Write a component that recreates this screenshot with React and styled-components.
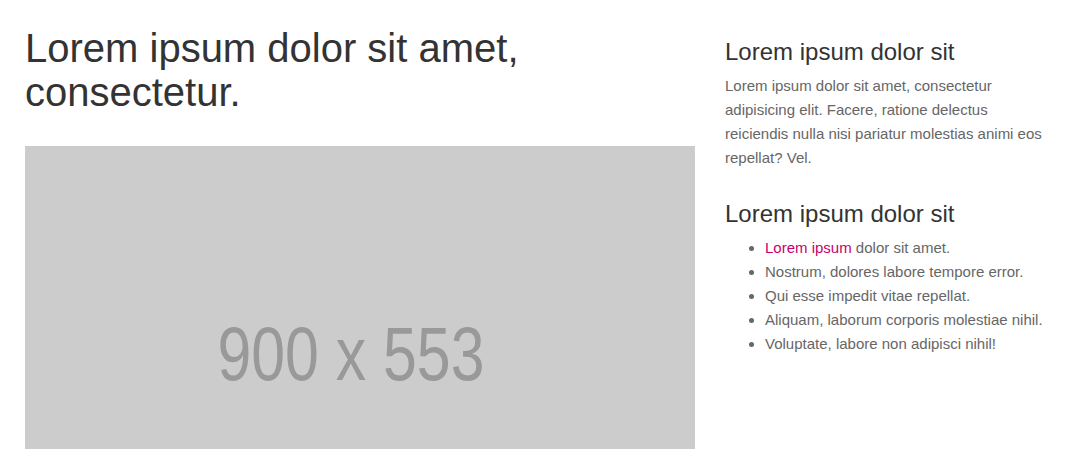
import styled, { createGlobalStyle } from "styled-components";

const GlobalStyle = createGlobalStyle`
  html, body {
    margin: 0;
    padding: 0;
    background: #fff;
  }
  body {
    font-family: "Liberation Sans", Arial, Helvetica, sans-serif;
    font-size: 15px;
    color: #333;
    overflow: hidden;
  }
`;

const Page = styled.div`
  display: grid;
  grid-template-columns: 670px 1fr;
  column-gap: 30px;
  padding: 0 25px;
`;

const Main = styled.div`
  display: flex;
  flex-direction: column;
`;

const Title = styled.h1`
  font-size: 40px;
  font-weight: 400;
  line-height: 44px;
  color: #333;
  margin: 26px 0 32px;
`;

const Placeholder = styled.div`
  width: 670px;
  height: 412px;
  background: #ccc;
  display: flex;
  align-items: center;
  justify-content: center;
  padding: 4px 18px 0 0;
  box-sizing: border-box;
`;

const Label = styled.span`
  color: #999;
  font-family: "Liberation Sans", Arial, sans-serif;
  font-size: 76px;
  line-height: 1;
  transform: scaleX(0.8);
`;

const Side = styled.aside`
  padding-top: 38px;
`;

const Heading = styled.h3`
  font-size: 24px;
  font-weight: 400;
  line-height: 28px;
  color: #333;
  margin: ${(p) => (p.$first ? "0" : "30px")} 0 8px;
`;

const Text = styled.p`
  margin: 0;
  font-size: 15px;
  line-height: 24px;
  color: #666;
`;

const List = styled.ul`
  margin: 0;
  padding-left: 40px;
  font-size: 15px;
  line-height: 24px;
  color: #666;
`;

const Accent = styled.span`
  color: #c7006e;
`;

const items = [
  "Nostrum, dolores labore tempore error.",
  "Qui esse impedit vitae repellat.",
  "Aliquam, laborum corporis molestiae nihil.",
  "Voluptate, labore non adipisci nihil!",
];

const App = () => {
  return (
    <>
      <GlobalStyle />
      <Page>
        <Main>
          <Title>
            Lorem ipsum dolor sit amet,
            <br />
            consectetur.
          </Title>
          <Placeholder>
            <Label>900 x 553</Label>
          </Placeholder>
        </Main>
        <Side>
          <Heading $first>Lorem ipsum dolor sit</Heading>
          <Text>
            Lorem ipsum dolor sit amet, consectetur adipisicing elit. Facere,
            ratione delectus reiciendis nulla nisi pariatur molestias animi eos
            repellat? Vel.
          </Text>
          <Heading>Lorem ipsum dolor sit</Heading>
          <List>
            <li>
              <Accent>Lorem ipsum</Accent> dolor sit amet.
            </li>
            {items.map((item) => (
              <li key={item}>{item}</li>
            ))}
          </List>
        </Side>
      </Page>
    </>
  );
};

export default App;
